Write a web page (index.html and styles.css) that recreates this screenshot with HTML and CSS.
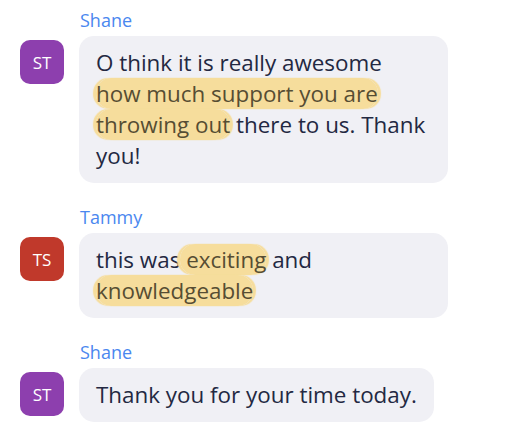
FILE: index.html
```html
<!DOCTYPE html>
<html>
<head>
<meta charset="utf-8">
<link rel="stylesheet" href="styles.css">
</head>
<body>
<div class="chat">
  <div class="group">
    <div class="name">Shane</div>
    <div class="row">
      <div class="avatar purple">ST</div>
      <div class="bubble">O think it is really awesome <span class="hl">how much support you are</span> <span class="hl">throwing out</span> there to us. Thank you!</div>
    </div>
  </div>
  <div class="group">
    <div class="name">Tammy</div>
    <div class="row">
      <div class="avatar red">TS</div>
      <div class="bubble">this was<span class="hl"> exciting</span> and <span class="hl">knowledgeable</span></div>
    </div>
  </div>
  <div class="group">
    <div class="name">Shane</div>
    <div class="row">
      <div class="avatar purple">ST</div>
      <div class="bubble">Thank you for your time today.</div>
    </div>
  </div>
</div>
</body>
</html>
```

FILE: styles.css
```css
html, body {
  margin: 0;
  padding: 0;
  background: #ffffff;
}
body {
  font-family: "Open Sans", "Noto Sans", sans-serif;
}
.chat {
  display: flex;
  flex-direction: column;
  gap: 23px;
  padding: 9px 0 0 20px;
}
.group {
  display: flex;
  flex-direction: column;
  gap: 5px;
}
.name {
  padding-left: 60px;
  font-size: 18px;
  line-height: 22px;
  color: #4a87ef;
}
.row {
  display: flex;
  align-items: flex-start;
  gap: 15px;
}
.avatar {
  flex: none;
  width: 44px;
  height: 44px;
  margin-top: 4px;
  border-radius: 10px;
  color: #ffffff;
  font-size: 17px;
  font-weight: 500;
  display: flex;
  align-items: center;
  justify-content: center;
}
.purple { background: #8d3fae; }
.red { background: #c0392b; }
.bubble {
  max-width: 335px;
  padding: 11px 17px 12px;
  background: #f0f0f5;
  border-radius: 15px;
  font-size: 22.4px;
  line-height: 31px;
  color: #232842;
}
.hl {
  background: #f6dd9c;
  box-shadow: -3px 0 1px #f6dd9c, 3px 0 1px #f6dd9c;
  color: #564d33;
  border-radius: 15px;
  -webkit-box-decoration-break: clone;
  box-decoration-break: clone;
}
```
